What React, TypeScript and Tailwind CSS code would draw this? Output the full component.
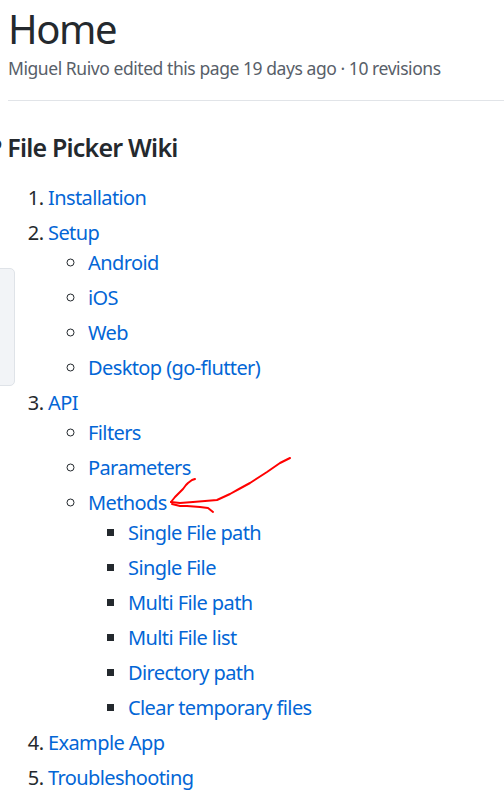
import React from "react";

const sub1 = ["Android", "iOS", "Web", "Desktop (go-flutter)"];
const sub3 = ["Filters", "Parameters"];
const methods = [
  "Single File path",
  "Single File",
  "Multi File path",
  "Multi File list",
  "Directory path",
  "Clear temporary files",
];

function A({ children }: { children: React.ReactNode }) {
  return <a className="text-[#0366d6]">{children}</a>;
}

export default function App() {
  return (
    <div
      className="relative w-[504px] h-[798px] overflow-hidden bg-white text-[#24292e]"
      style={{ fontFamily: '"Noto Sans", "Open Sans", sans-serif' }}
    >
      <div className="pl-[8px] pt-[4px]">
        <h1 className="text-[40px] leading-[50px] font-normal tracking-[-0.035em]">Home</h1>
        <div className="mt-[1px] text-[17.5px] leading-[26px] text-[#586069] tracking-[-0.025em]">
          Miguel Ruivo edited this page 19 days ago · 10 revisions
        </div>
        <div className="mt-[19px] h-px bg-[#e1e4e8]" />
        <h2 className="mt-[31px] -ml-[21px] text-[25px] leading-[30px] font-semibold tracking-[-0.032em]">
          P File Picker Wiki
        </h2>
        <ol className="mt-[21px] list-decimal pl-[40px] text-[20px] leading-[30px] tracking-[-0.03em] [&_li+li]:mt-[5px]">
          <li>
            <A>Installation</A>
          </li>
          <li>
            <A>Setup</A>
            <ul className="list-[circle] pl-[40px]">
              {sub1.map((s) => (
                <li key={s}>
                  <A>{s}</A>
                </li>
              ))}
            </ul>
          </li>
          <li>
            <A>API</A>
            <ul className="list-[circle] pl-[40px]">
              {sub3.map((s) => (
                <li key={s}>
                  <A>{s}</A>
                </li>
              ))}
              <li>
                <A>Methods</A>
                <ul className="list-[square] pl-[40px]">
                  {methods.map((s) => (
                    <li key={s}>
                      <A>{s}</A>
                    </li>
                  ))}
                </ul>
              </li>
            </ul>
          </li>
          <li>
            <A>Example App</A>
          </li>
          <li>
            <A>Troubleshooting</A>
          </li>
        </ol>
      </div>

      {/* side tab */}
      <div className="absolute left-[-6px] top-[268px] h-[118px] w-[21px] rounded-[5px] border border-[#dfe3e8] bg-[#f2f4f7]" />

      {/* red annotation arrow */}
      <svg
        className="absolute left-0 top-0 pointer-events-none"
        width="504"
        height="798"
        viewBox="0 0 504 798"
        fill="none"
        stroke="#ff0000"
        strokeWidth="2"
        strokeLinecap="round"
        strokeLinejoin="round"
      >
        <path d="M290 458 L280 463 L267 472 L250 483 L239 489 L230 494 L217 500 L205 501 L193 502 L180 503 L171 502" />
        <path d="M171 502 L175 497 L180 492 L183 489 L186 485 L188 483 L192 480 L195 479" />
        <path d="M172 504 L180 506 L187 506 L200 507 L208 508 L213 512" />
      </svg>
    </div>
  );
}
